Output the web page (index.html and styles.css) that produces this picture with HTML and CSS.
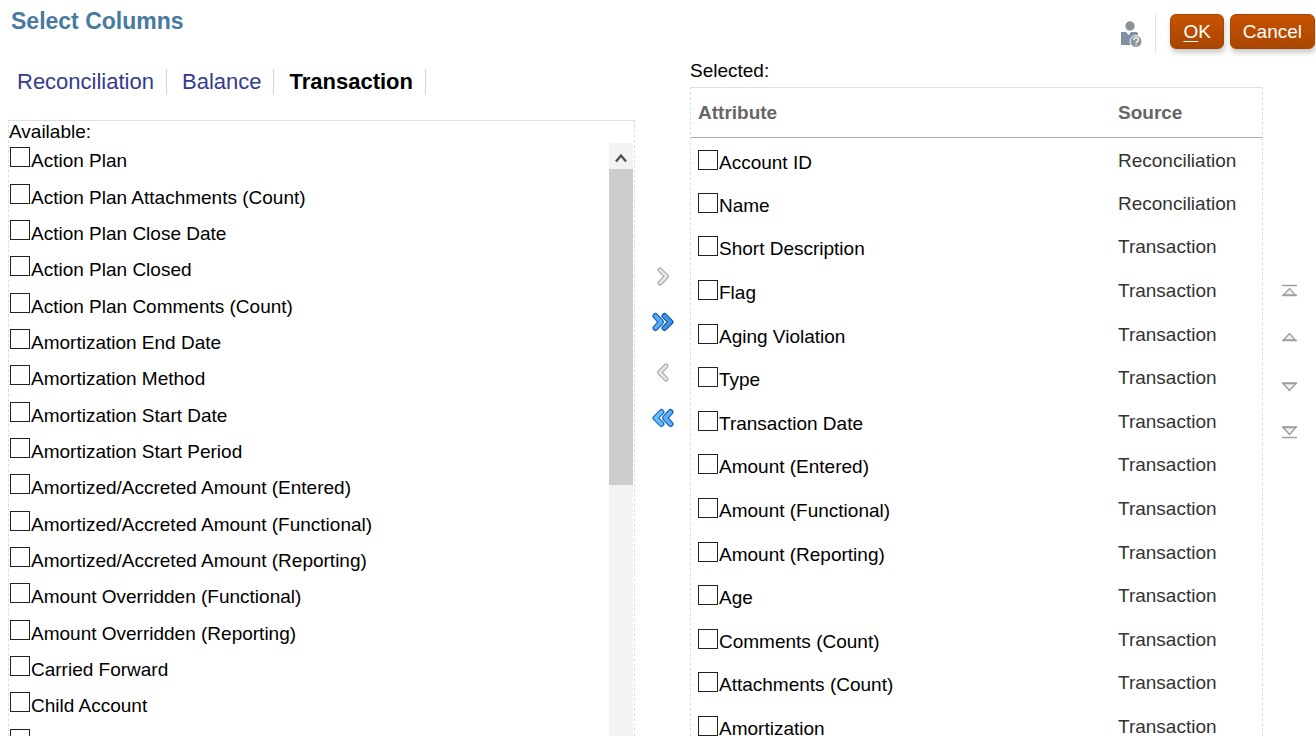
FILE: index.html
```html
<!DOCTYPE html>
<html lang="en">
<head>
<meta charset="utf-8">
<title>Select Columns</title>
<link rel="stylesheet" href="styles.css">
</head>
<body>
<div class="dialog">
  <header class="header">
    <h1 class="title">Select Columns</h1>
    <div class="toolbar">
      <button class="icon-button help" type="button" aria-label="Help">
        <svg width="22" height="28" viewBox="0 0 22 28">
          <circle cx="9" cy="5" r="4.700" fill="#8b929a"/>
          <path d="M0 11h5l2.500 3 2.500-3h5q2 0 2 2v2q-7 1-7 9H0z" fill="#7f91a6"/>
          <path d="M6 11h3.500l-1.500 3z" fill="#fff"/>
          <circle cx="15" cy="20.500" r="6" fill="#8e959c" stroke="#fff" stroke-width="1"/>
          <path d="M12.800 19q0-2.300 2.300-2.300t2.300 2q0 1.200-1.400 1.900-.9.500-.9 1.500M15.100 23.200v1.300" fill="none" stroke="#fff" stroke-width="1.300"/>
        </svg>
      </button>
      <span class="divider"></span>
      <button class="action" type="button"><u>O</u>K</button>
      <button class="action" type="button">Cancel</button>
    </div>
  </header>
  <main class="main">
    <section class="available">
      <nav class="tabs">
        <a class="tab" href="#reconciliation">Reconciliation</a>
        <a class="tab" href="#balance">Balance</a>
        <a class="tab current" href="#transaction" aria-current="page">Transaction</a>
      </nav>
      <div class="panel">
        <h2 class="caption">Available:</h2>
        <div class="scroller">
          <ul class="options">
            <li><label class="option"><input class="check" type="checkbox"><span>Action Plan</span></label></li>
            <li><label class="option"><input class="check" type="checkbox"><span>Action Plan Attachments (Count)</span></label></li>
            <li><label class="option"><input class="check" type="checkbox"><span>Action Plan Close Date</span></label></li>
            <li><label class="option"><input class="check" type="checkbox"><span>Action Plan Closed</span></label></li>
            <li><label class="option"><input class="check" type="checkbox"><span>Action Plan Comments (Count)</span></label></li>
            <li><label class="option"><input class="check" type="checkbox"><span>Amortization End Date</span></label></li>
            <li><label class="option"><input class="check" type="checkbox"><span>Amortization Method</span></label></li>
            <li><label class="option"><input class="check" type="checkbox"><span>Amortization Start Date</span></label></li>
            <li><label class="option"><input class="check" type="checkbox"><span>Amortization Start Period</span></label></li>
            <li><label class="option"><input class="check" type="checkbox"><span>Amortized/Accreted Amount (Entered)</span></label></li>
            <li><label class="option"><input class="check" type="checkbox"><span>Amortized/Accreted Amount (Functional)</span></label></li>
            <li><label class="option"><input class="check" type="checkbox"><span>Amortized/Accreted Amount (Reporting)</span></label></li>
            <li><label class="option"><input class="check" type="checkbox"><span>Amount Overridden (Functional)</span></label></li>
            <li><label class="option"><input class="check" type="checkbox"><span>Amount Overridden (Reporting)</span></label></li>
            <li><label class="option"><input class="check" type="checkbox"><span>Carried Forward</span></label></li>
            <li><label class="option"><input class="check" type="checkbox"><span>Child Account</span></label></li>
            <li><label class="option"><input class="check" type="checkbox"><span>Close Date</span></label></li>
          </ul>
          <div class="scrollbar">
            <button class="scroll-up" type="button" aria-label="Scroll up">
              <svg width="12" height="10" viewBox="0 0 12 10"><path d="M1 8.500l5-6 5 6" fill="none" stroke="#505050" stroke-width="2.400"/></svg>
            </button>
            <div class="thumb"></div>
          </div>
        </div>
      </div>
    </section>

    <div class="controls shuttle">
      <div class="control-pair">
        <button class="icon-button" type="button" aria-label="Move">
          <svg width="24" height="24" viewBox="0 0 24 24" fill="none" stroke-linecap="round" stroke-linejoin="round"><path d="M9 6l6.500 6.500L9 19" stroke="#a6a6a6" stroke-width="5"/><path d="M9 6l6.500 6.500L9 19" stroke="#e6e6e6" stroke-width="2.800"/></svg>
        </button>
        <button class="icon-button" type="button" aria-label="Move all">
          <svg width="24" height="24" viewBox="0 0 24 24" fill="none" stroke-linecap="round" stroke-linejoin="round"><path d="M4.500 6l5.500 6-5.500 6" stroke="#1c63b4" stroke-width="6"/><path d="M4.500 6l5.500 6-5.500 6" stroke="#55adf7" stroke-width="3.400"/><path d="M13.500 6l6 6-6 6" stroke="#1a5ba8" stroke-width="6"/><path d="M13.500 6l6 6-6 6" stroke="#3b98ea" stroke-width="3.400"/></svg>
        </button>
      </div>
      <div class="control-pair">
        <button class="icon-button" type="button" aria-label="Remove">
          <svg width="24" height="24" viewBox="0 0 24 24" fill="none" stroke-linecap="round" stroke-linejoin="round"><path d="M15 6l-6.500 6.500L15 19" stroke="#a6a6a6" stroke-width="5"/><path d="M15 6l-6.500 6.500L15 19" stroke="#e6e6e6" stroke-width="2.800"/></svg>
        </button>
        <button class="icon-button" type="button" aria-label="Remove all">
          <svg width="24" height="24" viewBox="0 0 24 24" fill="none" stroke-linecap="round" stroke-linejoin="round"><path d="M10.500 6l-6 6 6 6" stroke="#2470c0" stroke-width="6"/><path d="M10.500 6l-6 6 6 6" stroke="#6bbafb" stroke-width="3.400"/><path d="M19.500 6L14 12l5.500 6" stroke="#1c63b4" stroke-width="6"/><path d="M19.500 6L14 12l5.500 6" stroke="#5bb0f8" stroke-width="3.400"/></svg>
        </button>
      </div>
    </div>

    <section class="selected">
      <h2 class="caption">Selected:</h2>
      <div class="table-frame">
        <table class="columns">
          <thead>
            <tr><th scope="col">Attribute</th><th class="source" scope="col">Source</th></tr>
          </thead>
          <tbody>
            <tr><td><label class="option"><input class="check" type="checkbox"><span>Account ID</span></label></td><td class="source">Reconciliation</td></tr>
            <tr><td><label class="option"><input class="check" type="checkbox"><span>Name</span></label></td><td class="source">Reconciliation</td></tr>
            <tr><td><label class="option"><input class="check" type="checkbox"><span>Short Description</span></label></td><td class="source">Transaction</td></tr>
            <tr><td><label class="option"><input class="check" type="checkbox"><span>Flag</span></label></td><td class="source">Transaction</td></tr>
            <tr><td><label class="option"><input class="check" type="checkbox"><span>Aging Violation</span></label></td><td class="source">Transaction</td></tr>
            <tr><td><label class="option"><input class="check" type="checkbox"><span>Type</span></label></td><td class="source">Transaction</td></tr>
            <tr><td><label class="option"><input class="check" type="checkbox"><span>Transaction Date</span></label></td><td class="source">Transaction</td></tr>
            <tr><td><label class="option"><input class="check" type="checkbox"><span>Amount (Entered)</span></label></td><td class="source">Transaction</td></tr>
            <tr><td><label class="option"><input class="check" type="checkbox"><span>Amount (Functional)</span></label></td><td class="source">Transaction</td></tr>
            <tr><td><label class="option"><input class="check" type="checkbox"><span>Amount (Reporting)</span></label></td><td class="source">Transaction</td></tr>
            <tr><td><label class="option"><input class="check" type="checkbox"><span>Age</span></label></td><td class="source">Transaction</td></tr>
            <tr><td><label class="option"><input class="check" type="checkbox"><span>Comments (Count)</span></label></td><td class="source">Transaction</td></tr>
            <tr><td><label class="option"><input class="check" type="checkbox"><span>Attachments (Count)</span></label></td><td class="source">Transaction</td></tr>
            <tr><td><label class="option"><input class="check" type="checkbox"><span>Amortization</span></label></td><td class="source">Transaction</td></tr>
          </tbody>
        </table>
      </div>
    </section>

    <div class="controls reorder">
      <div class="control-pair">
        <button class="icon-button" type="button" aria-label="Move to top">
          <svg width="24" height="24" viewBox="0 0 24 24" fill="none"><path d="M4 6.500h15" stroke="#a0a0a0" stroke-width="1.500"/><path d="M5.500 16l6-6.500 6 6.500z" fill="#f0f0f0" stroke="#a0a0a0" stroke-width="1.300"/><path d="M4 16.500h15" stroke="#a0a0a0" stroke-width="1.500"/></svg>
        </button>
        <button class="icon-button" type="button" aria-label="Move up">
          <svg width="24" height="24" viewBox="0 0 24 24" fill="none"><path d="M5.500 15l6-6.500 6 6.500z" fill="#f0f0f0" stroke="#a0a0a0" stroke-width="1.300"/><path d="M4 15.500h15" stroke="#a0a0a0" stroke-width="1.500"/></svg>
        </button>
      </div>
      <div class="control-pair">
        <button class="icon-button" type="button" aria-label="Move down">
          <svg width="24" height="24" viewBox="0 0 24 24" fill="none"><path d="M5 8.500l6.500 7 6.500-7z" fill="#f0f0f0" stroke="#989898" stroke-width="1.300"/><path d="M4 8h15" stroke="#a0a0a0" stroke-width="1.500"/></svg>
        </button>
        <button class="icon-button" type="button" aria-label="Move to bottom">
          <svg width="24" height="24" viewBox="0 0 24 24" fill="none"><path d="M5 6.500l6.500 7 6.500-7z" fill="#f0f0f0" stroke="#989898" stroke-width="1.300"/><path d="M4 6h15M4 16.500h15" stroke="#a0a0a0" stroke-width="1.500"/></svg>
        </button>
      </div>
    </div>
  </main>
</div>
</body>
</html>
```
FILE: styles.css
```css
* { box-sizing: border-box; }

body {
  margin: 0;
  background: #fff;
  color: #000;
  font: 19px/22px "Liberation Sans", Arial, sans-serif;
}

button {
  font: inherit;
  cursor: pointer;
}

.dialog {
  display: flex;
  flex-direction: column;
  height: 100vh;
  overflow: hidden;
}

.header {
  display: flex;
  flex: none;
  justify-content: space-between;
  align-items: flex-start;
  height: 56px;
  padding-left: 11px;
}

.title {
  margin: 0;
  padding-top: 8px;
  color: #477a9f;
  font-size: 23px;
  line-height: 26px;
}

.toolbar {
  display: flex;
  gap: 6px;
  padding: 14px 1px 0 0;
}

.icon-button {
  display: block;
  padding: 0;
  border: 0;
  background: none;
}

.icon-button svg { display: block; }

.help { padding: 6px 6px 4px 0; }

.divider {
  width: 1px;
  height: 39px;
  margin-right: 8px;
  background: #e1e4e7;
}

.action {
  height: 35px;
  padding: 0 12px;
  border: 1px solid #a64505;
  border-radius: 6px;
  background: linear-gradient(#c75300, #a94600);
  box-shadow: 1px 4px 5px #ccc;
  color: #fff;
}

.action u { text-underline-offset: 3px; }

.main {
  display: grid;
  grid-template-columns: 627fr 55px 573fr 53px;
  flex: 1;
  min-height: 0;
  padding-left: 8px;
}

.available,
.selected {
  display: flex;
  flex-direction: column;
  min-height: 0;
}

.tabs {
  display: flex;
  gap: 15px;
  padding: 13px 0 25px 9px;
}

.tab {
  padding-right: 12px;
  border-right: 1px solid #ccd8e2;
  color: #333c8f;
  font-size: 22px;
  line-height: 26px;
  text-decoration: none;
}

.current {
  color: #000;
  font-weight: bold;
}

.panel,
.table-frame {
  flex: 1;
  min-height: 0;
  overflow: hidden;
  border: 1px dashed #dedede;
  border-top-style: solid;
  border-bottom: 0;
}

.panel {
  display: flex;
  flex-direction: column;
}

.caption {
  margin: 0;
  font-size: 19px;
  font-weight: normal;
}

.scroller {
  display: flex;
  flex: 1;
  min-height: 0;
}

.options {
  display: grid;
  flex: 1;
  grid-auto-rows: 37px 36px 36px;
  align-content: start;
  margin: 0;
  padding: 4px 0 0 1px;
  list-style: none;
}

.option {
  display: flex;
  align-items: flex-start;
  gap: 1px;
}

.options span { padding-top: 3px; }

.columns span { padding-top: 2px; }

.check {
  flex: none;
  width: 20px;
  height: 20px;
  margin: 0;
  border: 1px solid #222;
  background: #fff;
  appearance: none;
}

.check:checked { background: #477a9f; }

.scrollbar {
  width: 24px;
  margin-right: 1px;
  background: #f3f3f3;
}

.scroll-up {
  display: flex;
  align-items: center;
  justify-content: center;
  width: 100%;
  height: 26px;
  padding: 4px 0 0;
  border: 0;
  background: #f3f3f3;
}

.thumb {
  height: 56%;
  max-height: 316px;
  background: #cdcdcd;
}

.controls {
  display: flex;
  flex-direction: column;
  align-items: center;
  gap: 26px;
}

.control-pair {
  display: flex;
  flex-direction: column;
  gap: 22px;
}

.shuttle { padding-top: 208px; }

.reorder { padding-top: 223px; }

.selected .caption { padding: 4px 0 5px; }

.columns {
  width: 100%;
  border-collapse: collapse;
  table-layout: fixed;
}

.columns th {
  height: 49px;
  padding: 1px 0 0 7px;
  border-bottom: 1px solid #aaa;
  color: #666;
  text-align: left;
}

.columns td {
  height: 44px;
  padding: 12px 0 0 7px;
  vertical-align: top;
}

.columns tr:nth-child(5n + 2) td,
.columns tr:nth-child(5n) td { height: 43px; }

.columns .source {
  width: 144px;
  padding-left: 0;
}

.columns td.source { color: #333; }
```
